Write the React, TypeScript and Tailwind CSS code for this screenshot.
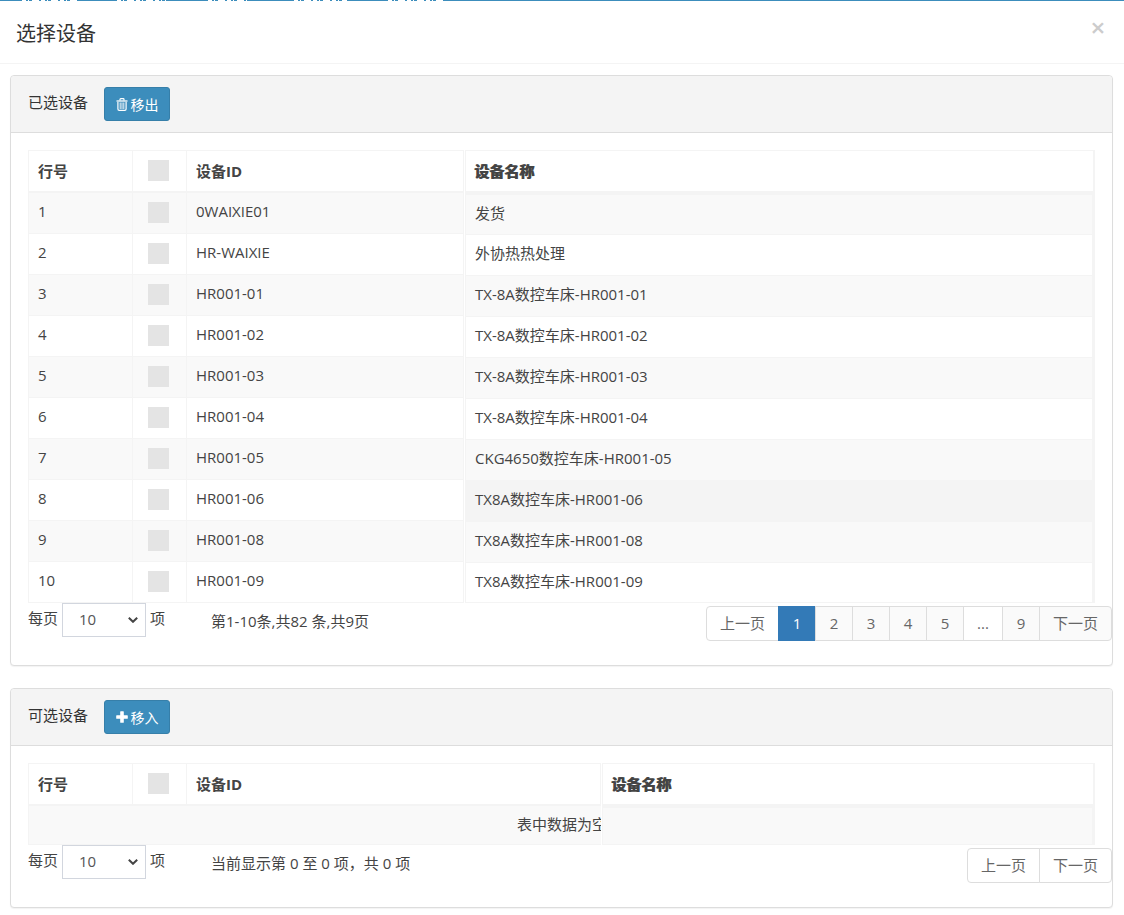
import type { ReactNode } from "react";

type Device = { id: string; name: string };

const selectedDevices: Device[] = [
  { id: "0WAIXIE01", name: "发货" },
  { id: "HR-WAIXIE", name: "外协热热处理" },
  { id: "HR001-01", name: "TX-8A数控车床-HR001-01" },
  { id: "HR001-02", name: "TX-8A数控车床-HR001-02" },
  { id: "HR001-03", name: "TX-8A数控车床-HR001-03" },
  { id: "HR001-04", name: "TX-8A数控车床-HR001-04" },
  { id: "HR001-05", name: "CKG4650数控车床-HR001-05" },
  { id: "HR001-06", name: "TX8A数控车床-HR001-06" },
  { id: "HR001-08", name: "TX8A数控车床-HR001-08" },
  { id: "HR001-09", name: "TX8A数控车床-HR001-09" },
];

const HOVERED_ROW = 7;

function TrashIcon() {
  return (
    <svg
      aria-hidden="true"
      viewBox="0 0 12 13"
      className="h-[13px] w-3"
      fill="none"
      stroke="currentColor"
    >
      <path d="M0.5 3h11" strokeWidth="1.3" />
      <path d="M4 2.5v-1q0-.8.8-.8h2.4q.8 0 .8.8v1" strokeWidth="1.2" />
      <path d="M1.9 4v7q0 1.3 1.3 1.3h5.6q1.3 0 1.3-1.3v-7" strokeWidth="1.2" />
      <path d="M4.2 4.5v6.5M6 4.5v6.5M7.8 4.5v6.5" strokeWidth="0.9" />
    </svg>
  );
}

function PlusIcon() {
  return (
    <svg aria-hidden="true" viewBox="0 0 12 12" className="size-3" fill="currentColor">
      <path d="M4.2.8q0-.6.6-.6h2.4q.6 0 .6.6v3.4h3.4q.6 0 .6.6v2.4q0 .6-.6.6h-3.4v3.4q0 .6-.6.6h-2.4q-.6 0-.6-.6v-3.4h-3.4q-.6 0-.6-.6v-2.4q0-.6.6-.6h3.4z" />
    </svg>
  );
}

function CheckBox({ label }: { label: string }) {
  return (
    <input
      type="checkbox"
      aria-label={label}
      className="ml-[15px] block size-[21px] appearance-none bg-[#e4e4e4]"
    />
  );
}

function Panel({
  title,
  action,
  children,
}: {
  title: string;
  action: ReactNode;
  children: ReactNode;
}) {
  return (
    <section className="rounded border border-[#ddd] bg-white shadow-[0_1px_1px_rgba(0,0,0,0.05)]">
      <div className="flex items-start gap-[16px] rounded-t border-b border-[#ddd] bg-[#f4f4f4] px-[17px] py-[11px]">
        <h2 className="w-[60px] leading-[30px] text-[#333]">{title}</h2>
        {action}
      </div>
      {children}
    </section>
  );
}

function ActionButton({ children }: { children: ReactNode }) {
  return (
    <button
      type="button"
      className="flex h-[34px] w-[66px] items-center justify-center gap-[3px] rounded-[3px] border border-[#367fa9] bg-[#3c8dbc] text-[14px] text-white"
    >
      {children}
    </button>
  );
}

function MainHead() {
  return (
    <thead>
      <tr className="h-[43px] text-left">
        <th className="w-[105px] border-x border-t border-b-2 border-[#f4f4f4] pl-[9px]">
          行号
        </th>
        <th className="w-[54px] border-t border-r border-b-2 border-[#f4f4f4] pb-px">
          <CheckBox label="全选" />
        </th>
        <th className="border-t border-r border-b-2 border-[#f4f4f4] pl-[9px]">设备ID</th>
      </tr>
    </thead>
  );
}

function NameHead() {
  return (
    <thead>
      <tr className="h-[45px] text-left">
        <th className="border-t border-r-2 border-b-4 border-l border-[#f4f4f4] pl-[8px] [text-shadow:1px_0_#444]">
          设备名称
        </th>
      </tr>
    </thead>
  );
}

function PageSize({ id }: { id: string }) {
  return (
    <div className="flex">
      <label htmlFor={id} className="mr-[4px] leading-[30px]">
        每页
      </label>
      <div className="grid items-center">
        <select
          id={id}
          defaultValue="10"
          className="col-start-1 row-start-1 h-[34px] w-[84px] appearance-none border border-[#d2d6de] bg-white pb-px pl-[16px] text-[#555]"
        >
          <option>10</option>
          <option>25</option>
          <option>50</option>
          <option>100</option>
        </select>
        <svg
          aria-hidden="true"
          viewBox="0 0 10 6"
          className="pointer-events-none col-start-1 row-start-1 mr-[8px] h-[6px] w-[10px] justify-self-end"
          fill="none"
          stroke="#444"
          strokeWidth="2"
        >
          <path d="M0.8 0.8 5 4.8 9.2 0.8" />
        </svg>
      </div>
      <span className="ml-[4px] leading-[30px]">项</span>
    </div>
  );
}

function Footer({ id, info, children }: { id: string; info: string; children: ReactNode }) {
  return (
    <div className="flex h-[62px] items-start pl-[17px]">
      <PageSize id={id} />
      <p className="ml-[46px] leading-[36px]">{info}</p>
      <nav aria-label="分页" className="mt-[3px] ml-auto flex text-[#666]">
        {children}
      </nav>
    </div>
  );
}

const pageCell = "-ml-px h-[35px] border border-[#ddd]";

export default function App() {
  return (
    <div
      role="dialog"
      aria-labelledby="dialog-title"
      className="bg-white font-['Open_Sans','Noto_Sans_CJK_SC',sans-serif] text-[15px] leading-[21px] text-[#444]"
    >
      <svg aria-hidden="true" className="block h-px w-full bg-[#3c8dbc]">
        <path
          d="M22 .5h56M117 .5h49M208 .5h39M294 .5h53M388 .5h55"
          stroke="#fff"
          strokeDasharray="4 2 1 3 7 2"
        />
      </svg>
      <header className="flex items-start justify-between border-b border-[#f4f4f4] px-[16px] pt-[18px] pb-[14px]">
        <h1 id="dialog-title" className="text-[20px] leading-[30px] text-[#333]">
          选择设备
        </h1>
        <button
          type="button"
          aria-label="关闭"
          className="w-[20px] text-center text-[26px] leading-[16px] font-semibold text-[#ccc]"
        >
          ×
        </button>
      </header>

      <main className="flex flex-col gap-[22px] px-[11px] pt-[11px] pb-[6px] pl-[10px]">
        <Panel
          title="已选设备"
          action={
            <ActionButton>
              <TrashIcon />
              移出
            </ActionButton>
          }
        >
          <div className="flex items-start gap-px px-[17px] pt-[17px]">
            <table className="w-[436px] table-fixed border-separate border-spacing-0">
              <MainHead />
              <tbody>
                {selectedDevices.map((device, i) => (
                  <tr key={device.id} className="h-[41px] odd:bg-[#f9f9f9]">
                    <td className="border-x border-b border-[#f4f4f4] pb-[3px] pl-[9px]">
                      {i + 1}
                    </td>
                    <td className="border-r border-b border-[#f4f4f4] pb-px">
                      <CheckBox label={`选择 ${device.id}`} />
                    </td>
                    <td className="border-r border-b border-[#f4f4f4] pb-[3px] pl-[9px]">
                      {device.id}
                    </td>
                  </tr>
                ))}
              </tbody>
            </table>
            <table className="flex-1 table-fixed border-separate border-spacing-0">
              <NameHead />
              <tbody>
                {selectedDevices.map((device, i) => (
                  <tr
                    key={device.id}
                    className={`h-[41px] first:h-[40px] last:h-[40px] ${
                      i === HOVERED_ROW ? "bg-[#f4f4f4]" : "odd:bg-[#f9f9f9]"
                    }`}
                  >
                    <td className="border-r-[3px] border-b border-l border-[#f4f4f4] pb-[3px] pl-[9px]">
                      {device.name}
                    </td>
                  </tr>
                ))}
              </tbody>
            </table>
          </div>
          <Footer id="selected-size" info="第1-10条,共82 条,共9页">
            <button type="button" className={`${pageCell} w-[73px] rounded-l bg-white`}>
              上一页
            </button>
            <button
              type="button"
              aria-current="page"
              className="-ml-px h-[35px] w-[38px] bg-[#337ab7] text-white"
            >
              1
            </button>
            {[2, 3, 4, 5].map((page) => (
              <button key={page} type="button" className={`${pageCell} w-[38px] bg-[#fafafa]`}>
                {page}
              </button>
            ))}
            <button type="button" disabled className={`${pageCell} w-[40px] bg-white`}>
              ...
            </button>
            <button type="button" className={`${pageCell} w-[38px] bg-[#fafafa]`}>
              9
            </button>
            <button type="button" className={`${pageCell} w-[73px] rounded-r bg-[#fafafa]`}>
              下一页
            </button>
          </Footer>
        </Panel>

        <Panel
          title="可选设备"
          action={
            <ActionButton>
              <PlusIcon />
              移入
            </ActionButton>
          }
        >
          <div className="flex items-start gap-px px-[17px] pt-[17px]">
            <table className="w-[573px] table-fixed border-separate border-spacing-0">
              <MainHead />
              <tbody>
                <tr className="h-[39px] bg-[#f9f9f9]">
                  <td
                    colSpan={3}
                    className="overflow-hidden border-b border-l border-[#f4f4f4] pb-px pl-[488px] whitespace-nowrap"
                  >
                    表中数据为空
                  </td>
                </tr>
              </tbody>
            </table>
            <table className="flex-1 table-fixed border-separate border-spacing-0">
              <NameHead />
              <tbody>
                <tr className="h-[37px] bg-[#f9f9f9]">
                  <td className="border-r-[3px] border-b border-l border-[#f4f4f4]" />
                </tr>
              </tbody>
            </table>
          </div>
          <Footer id="available-size" info="当前显示第 0 至 0 项，共 0 项">
            <button type="button" disabled className={`${pageCell} w-[73px] rounded-l bg-white`}>
              上一页
            </button>
            <button type="button" disabled className={`${pageCell} w-[73px] rounded-r bg-white`}>
              下一页
            </button>
          </Footer>
        </Panel>
      </main>
    </div>
  );
}
